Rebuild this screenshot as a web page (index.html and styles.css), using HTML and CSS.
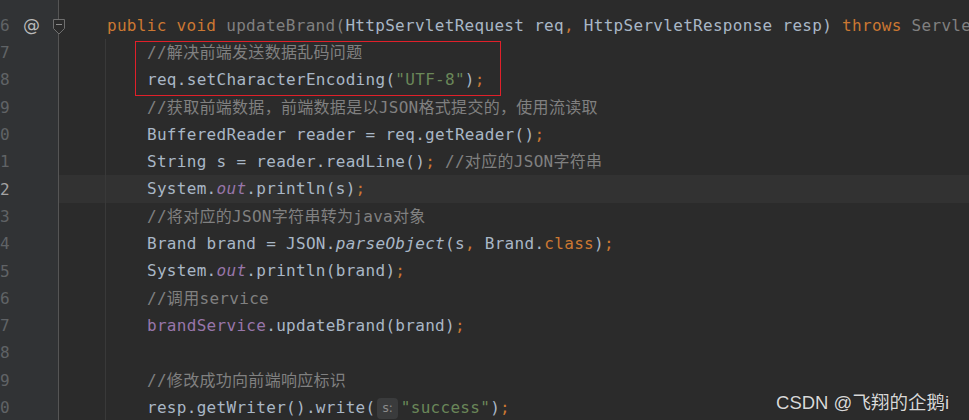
FILE: index.html
```html
<!DOCTYPE html>
<html lang="zh-CN">
<head>
    <meta charset="UTF-8">
    <title>BrandServlet.java</title>
    <link rel="stylesheet" href="styles.css">
</head>
<body>
    <div class="editor">
        <!-- Gutter -->
        <div class="gutter">
            <div class="row">
                <span class="num">96</span>
                <span class="mark">@</span>
                <svg class="fold" width="12" height="16" viewBox="0 0 12 16">
                    <path d="M0.5 0.5 H11.5 V9.5 L6 15 L0.5 9.5 Z" fill="#2b2b2b" stroke="#6f6f6f"/>
                    <path d="M3 5.5 H9" stroke="#8a8a8a"/>
                </svg>
            </div>
            <div class="row"><span class="num">97</span></div>
            <div class="row"><span class="num">98</span></div>
            <div class="row"><span class="num">99</span></div>
            <div class="row"><span class="num">100</span></div>
            <div class="row"><span class="num">101</span></div>
            <div class="row current"><span class="num">102</span></div>
            <div class="row"><span class="num">103</span></div>
            <div class="row"><span class="num">104</span></div>
            <div class="row"><span class="num">105</span></div>
            <div class="row"><span class="num">106</span></div>
            <div class="row"><span class="num">107</span></div>
            <div class="row"><span class="num">108</span></div>
            <div class="row"><span class="num">109</span></div>
            <div class="row"><span class="num">110</span></div>
        </div>

        <!-- Code -->
        <div class="code">
            <div class="line"><span class="kw">public void </span><span class="dim">updateBrand(</span>HttpServletRequest req<span class="kw">, </span>HttpServletResponse resp) <span class="kw">throws </span><span class="dim">ServletException</span><span class="kw">, </span>IOException {</div>
            <div class="body">
                <div class="line"><span class="cm">//解决前端发送数据乱码问题</span></div>
                <div class="line">req.setCharacterEncoding(<span class="str">"UTF-8"</span>)<span class="kw">;</span></div>
                <div class="line"><span class="cm">//获取前端数据，前端数据是以JSON格式提交的，使用流读取</span></div>
                <div class="line">BufferedReader reader = req.getReader()<span class="kw">;</span></div>
                <div class="line">String s = reader.readLine()<span class="kw">;</span> <span class="cm">//对应的JSON字符串</span></div>
                <div class="line current">System.<span class="fld it">out</span>.println(s)<span class="kw">;</span></div>
                <div class="line"><span class="cm">//将对应的JSON字符串转为java对象</span></div>
                <div class="line">Brand brand = JSON.<span class="it">parseObject</span>(s<span class="kw">,</span> Brand.<span class="kw">class</span>)<span class="kw">;</span></div>
                <div class="line">System.<span class="fld it">out</span>.println(brand)<span class="kw">;</span></div>
                <div class="line"><span class="cm">//调用service</span></div>
                <div class="line"><span class="fld">brandService</span>.updateBrand(brand)<span class="kw">;</span></div>
                <div class="line"></div>
                <div class="line"><span class="cm">//修改成功向前端响应标识</span></div>
                <div class="line">resp.getWriter().write(<span class="hint">s:</span><span class="str">"success"</span>)<span class="kw">;</span></div>
            </div>
            <div class="redbox"></div>
        </div>

        <div class="watermark">CSDN @飞翔的企鹅i</div>
    </div>
</body>
</html>
```

FILE: styles.css
```css
* {
    margin: 0;
    padding: 0;
    box-sizing: border-box;
}
body {
    background-color: #2b2b2b;
    overflow: hidden;
}
.editor {
    position: relative;
    display: flex;
    height: 420px;
    background: #2b2b2b;
    font-family: "DejaVu Sans Mono", "Liberation Mono", "Noto Sans CJK SC", monospace;
    font-size: 16px;
    letter-spacing: 0.3px;
    color: #a9b7c6;
}
/* Gutter */
.gutter {
    width: 59px;
    flex-shrink: 0;
    padding-top: 11.7px;
    background: #313335;
    border-right: 1px solid #555555;
}
.row {
    display: flex;
    align-items: center;
    height: 27.3px;
}
.num {
    display: flex;
    justify-content: flex-end;
    width: 10px;
    color: #606366;
    white-space: nowrap;
}
.row.current .num {
    color: #a4a3a3;
}
.mark {
    margin-left: 13px;
    font-family: "DejaVu Sans", sans-serif;
    font-size: 17px;
    color: #bbbbbb;
}
.fold {
    position: relative;
    z-index: 2;
    margin-left: auto;
    margin-right: -7px;
    margin-top: 3px;
}
/* Code */
.code {
    position: relative;
    flex: 1;
    padding-top: 11.7px;
    overflow: hidden;
}
.line {
    height: 27.3px;
    line-height: 27.3px;
    padding-left: 48px;
    white-space: pre;
}
.body {
    position: relative;
}
.body .line {
    padding-left: 88px;
}
.body::before {
    content: "";
    position: absolute;
    left: 46px;
    top: 0;
    bottom: 0;
    border-left: 1px solid #393939;
    z-index: 1;
}
.line.current {
    background: #323232;
}
.kw {
    color: #cc7832;
}
.dim {
    color: #808080;
}
.cm {
    color: #808080;
}
.str {
    color: #6a8759;
}
.fld {
    color: #9876aa;
}
.it {
    font-style: italic;
}
.hint {
    display: inline-block;
    height: 21px;
    line-height: 21px;
    margin: 0 3px 0 2px;
    padding: 0 5px;
    border-radius: 4px;
    background: #3a3b3c;
    color: #8c8c8c;
    font-family: "DejaVu Sans", sans-serif;
    font-size: 12px;
    letter-spacing: 0;
    vertical-align: middle;
}
/* Annotation */
.redbox {
    position: absolute;
    left: 76px;
    top: 41px;
    width: 366px;
    height: 55px;
    border: 1px solid #e0202a;
}
.watermark {
    position: absolute;
    right: 20px;
    top: 388px;
    font-family: "Liberation Sans", "Noto Sans CJK SC", sans-serif;
    font-size: 18.5px;
    letter-spacing: 0;
    color: #d8d8d8;
    text-shadow: 0 0 1px rgba(0, 0, 0, 0.5);
}
```
